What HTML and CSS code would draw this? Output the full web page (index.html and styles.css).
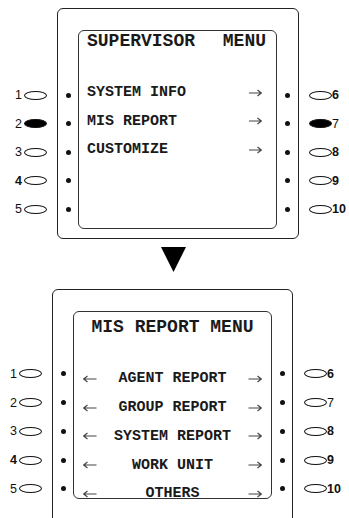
FILE: index.html
```html
<!DOCTYPE html>
<html>
<head>
<meta charset="utf-8">
<link rel="stylesheet" href="styles.css">
</head>
<body>
<div class="panel panel-top">
  <div class="btns btns-left">
    <div class="btn"><span class="num">1</span><span class="oval"></span></div>
    <div class="btn"><span class="num">2</span><span class="oval filled"></span></div>
    <div class="btn"><span class="num">3</span><span class="oval"></span></div>
    <div class="btn"><span class="num b">4</span><span class="oval"></span></div>
    <div class="btn"><span class="num">5</span><span class="oval"></span></div>
  </div>
  <div class="frame">
    <div class="dots dots-l">
      <div class="dotrow"><span class="dot"></span></div>
      <div class="dotrow"><span class="dot"></span></div>
      <div class="dotrow"><span class="dot"></span></div>
      <div class="dotrow"><span class="dot"></span></div>
      <div class="dotrow"><span class="dot"></span></div>
    </div>
    <div class="screen">
      <div class="title title-split"><span>SUPERVISOR</span><span>MENU</span></div>
      <div class="rows">
        <div class="row"><span>SYSTEM INFO</span><svg class="arr" width="13" height="8" viewBox="0 0 13 8"><path d="M0 4H12.3M8.5 1L12.3 4L8.5 7" fill="none" stroke="#444" stroke-width="1.1"/></svg></div>
        <div class="row"><span>MIS REPORT</span><svg class="arr" width="13" height="8" viewBox="0 0 13 8"><path d="M0 4H12.3M8.5 1L12.3 4L8.5 7" fill="none" stroke="#444" stroke-width="1.1"/></svg></div>
        <div class="row"><span>CUSTOMIZE</span><svg class="arr" width="13" height="8" viewBox="0 0 13 8"><path d="M0 4H12.3M8.5 1L12.3 4L8.5 7" fill="none" stroke="#444" stroke-width="1.1"/></svg></div>
      </div>
    </div>
    <div class="dots dots-r">
      <div class="dotrow"><span class="dot"></span></div>
      <div class="dotrow"><span class="dot"></span></div>
      <div class="dotrow"><span class="dot"></span></div>
      <div class="dotrow"><span class="dot"></span></div>
      <div class="dotrow"><span class="dot"></span></div>
    </div>
  </div>
  <div class="btns btns-right">
    <div class="btn"><span class="oval"></span><span class="num b">6</span></div>
    <div class="btn"><span class="oval filled"></span><span class="num">7</span></div>
    <div class="btn"><span class="oval"></span><span class="num b">8</span></div>
    <div class="btn"><span class="oval"></span><span class="num b">9</span></div>
    <div class="btn"><span class="oval"></span><span class="num b">10</span></div>
  </div>
</div>

<div class="down"><svg width="25" height="25" viewBox="0 0 25 25"><path d="M0 0H25L12.5 25Z" fill="#000"/></svg></div>

<div class="panel panel-bottom">
  <div class="btns btns-left">
    <div class="btn"><span class="num">1</span><span class="oval"></span></div>
    <div class="btn"><span class="num">2</span><span class="oval"></span></div>
    <div class="btn"><span class="num">3</span><span class="oval"></span></div>
    <div class="btn"><span class="num b">4</span><span class="oval"></span></div>
    <div class="btn"><span class="num">5</span><span class="oval"></span></div>
  </div>
  <div class="frame">
    <div class="dots dots-l">
      <div class="dotrow"><span class="dot"></span></div>
      <div class="dotrow"><span class="dot"></span></div>
      <div class="dotrow"><span class="dot"></span></div>
      <div class="dotrow"><span class="dot"></span></div>
      <div class="dotrow"><span class="dot"></span></div>
    </div>
    <div class="screen">
      <div class="title title-center">MIS REPORT MENU</div>
      <div class="rows">
        <div class="row row3"><svg class="arr" width="14" height="8" viewBox="0 0 14 8"><path d="M13.5 4H0.7M4.5 1L0.7 4L4.5 7" fill="none" stroke="#444" stroke-width="1.1"/></svg><span>AGENT REPORT</span><svg class="arr" width="14" height="8" viewBox="0 0 14 8"><path d="M0.5 4H13.3M9.5 1L13.3 4L9.5 7" fill="none" stroke="#444" stroke-width="1.1"/></svg></div>
        <div class="row row3"><svg class="arr" width="14" height="8" viewBox="0 0 14 8"><path d="M13.5 4H0.7M4.5 1L0.7 4L4.5 7" fill="none" stroke="#444" stroke-width="1.1"/></svg><span>GROUP REPORT</span><svg class="arr" width="14" height="8" viewBox="0 0 14 8"><path d="M0.5 4H13.3M9.5 1L13.3 4L9.5 7" fill="none" stroke="#444" stroke-width="1.1"/></svg></div>
        <div class="row row3"><svg class="arr" width="14" height="8" viewBox="0 0 14 8"><path d="M13.5 4H0.7M4.5 1L0.7 4L4.5 7" fill="none" stroke="#444" stroke-width="1.1"/></svg><span>SYSTEM REPORT</span><svg class="arr" width="14" height="8" viewBox="0 0 14 8"><path d="M0.5 4H13.3M9.5 1L13.3 4L9.5 7" fill="none" stroke="#444" stroke-width="1.1"/></svg></div>
        <div class="row row3"><svg class="arr" width="14" height="8" viewBox="0 0 14 8"><path d="M13.5 4H0.7M4.5 1L0.7 4L4.5 7" fill="none" stroke="#444" stroke-width="1.1"/></svg><span>WORK UNIT</span><svg class="arr" width="14" height="8" viewBox="0 0 14 8"><path d="M0.5 4H13.3M9.5 1L13.3 4L9.5 7" fill="none" stroke="#444" stroke-width="1.1"/></svg></div>
        <div class="row row3"><svg class="arr" width="14" height="8" viewBox="0 0 14 8"><path d="M13.5 4H0.7M4.5 1L0.7 4L4.5 7" fill="none" stroke="#444" stroke-width="1.1"/></svg><span>OTHERS</span><svg class="arr" width="14" height="8" viewBox="0 0 14 8"><path d="M0.5 4H13.3M9.5 1L13.3 4L9.5 7" fill="none" stroke="#444" stroke-width="1.1"/></svg></div>
      </div>
    </div>
    <div class="dots dots-r">
      <div class="dotrow"><span class="dot"></span></div>
      <div class="dotrow"><span class="dot"></span></div>
      <div class="dotrow"><span class="dot"></span></div>
      <div class="dotrow"><span class="dot"></span></div>
      <div class="dotrow"><span class="dot"></span></div>
    </div>
  </div>
  <div class="btns btns-right">
    <div class="btn"><span class="oval"></span><span class="num b">6</span></div>
    <div class="btn"><span class="oval"></span><span class="num">7</span></div>
    <div class="btn"><span class="oval"></span><span class="num b">8</span></div>
    <div class="btn"><span class="oval"></span><span class="num b">9</span></div>
    <div class="btn"><span class="oval"></span><span class="num b">10</span></div>
  </div>
</div>
</body>
</html>
```
FILE: styles.css
```css
html, body {
  margin: 0;
  padding: 0;
  background: #fff;
}
body {
  width: 349px;
  height: 518px;
  overflow: hidden;
  font-family: "Liberation Sans", Arial, sans-serif;
  color: #111;
}
.panel {
  display: flex;
  align-items: flex-start;
}
.panel-top {
  margin-top: 8px;
}
.btns {
  display: flex;
  flex-direction: column;
  box-sizing: border-box;
}
.btn {
  display: flex;
  align-items: center;
  height: 28.5px;
}
.btns-left .btn {
  justify-content: flex-end;
  gap: 2px;
}
.btns-right .btn {
  justify-content: flex-start;
  gap: 0;
}
.panel-top .btns-left {
  width: 57px;
  padding-right: 10px;
  padding-top: 72.75px;
}
.panel-top .btns-right {
  padding-left: 10px;
  padding-top: 72.75px;
}
.num {
  font-size: 12.5px;
  line-height: 12px;
  color: #111;
}
.num.b {
  font-weight: bold;
}
.oval {
  display: block;
  width: 23px;
  height: 9px;
  box-sizing: border-box;
  border: 1px solid #111;
  border-radius: 50%;
}
.oval.filled {
  background: #000;
}
.frame {
  display: flex;
  align-items: flex-start;
  box-sizing: border-box;
  border: 1px solid #222;
  border-radius: 6px;
}
.panel-top .frame {
  width: 242px;
  height: 231px;
}
.dots {
  display: flex;
  flex-direction: column;
  align-items: center;
  width: 20px;
}
.panel-top .dots {
  padding-top: 71.75px;
}
.panel-top .dots-r {
  width: 21px;
}
.dotrow {
  display: flex;
  align-items: center;
  justify-content: center;
  height: 28.5px;
}
.dot {
  display: block;
  width: 5px;
  height: 5px;
  border-radius: 50%;
  background: #111;
}
.screen {
  box-sizing: border-box;
  width: 199px;
  border: 1px solid #333;
  border-radius: 6px;
  font-family: "Liberation Mono", "Courier New", monospace;
  font-weight: bold;
  color: #1a1a1a;
}
.panel-top .screen {
  margin-top: 21px;
  height: 199px;
}
.title {
  font-size: 18px;
  line-height: 20px;
}
.title-split {
  display: flex;
  justify-content: space-between;
  padding: 0 10px 0 8px;
}
.rows {
  display: flex;
  flex-direction: column;
}
.panel-top .rows {
  margin-top: 27.25px;
}
.row {
  display: flex;
  align-items: center;
  justify-content: space-between;
  height: 28.5px;
  font-size: 15px;
  padding: 0 14px 0 8px;
}
.arr {
  display: block;
}

.down {
  display: flex;
  margin: 8px 0 0 161px;
  height: 25px;
}

.panel-bottom {
  margin-top: 17px;
}
.panel-bottom .btn,
.panel-bottom .dotrow,
.panel-bottom .row {
  height: 28.75px;
}
.panel-bottom .btns-left {
  width: 52px;
  padding-right: 10px;
  padding-top: 70.6px;
}
.panel-bottom .btns-right {
  padding-left: 11px;
  padding-top: 70.6px;
}
.panel-bottom .frame {
  width: 241px;
  height: 250px;
}
.panel-bottom .dots {
  padding-top: 69.6px;
}
.panel-bottom .screen {
  margin-top: 21px;
  height: 188px;
}
.title-center {
  text-align: center;
  margin-top: 4.5px;
}
.panel-bottom .rows {
  margin-top: 28.1px;
}
.row.row3 {
  display: grid;
  grid-template-columns: 14px 1fr 14px;
  padding: 0 9px;
  text-align: center;
}
```
